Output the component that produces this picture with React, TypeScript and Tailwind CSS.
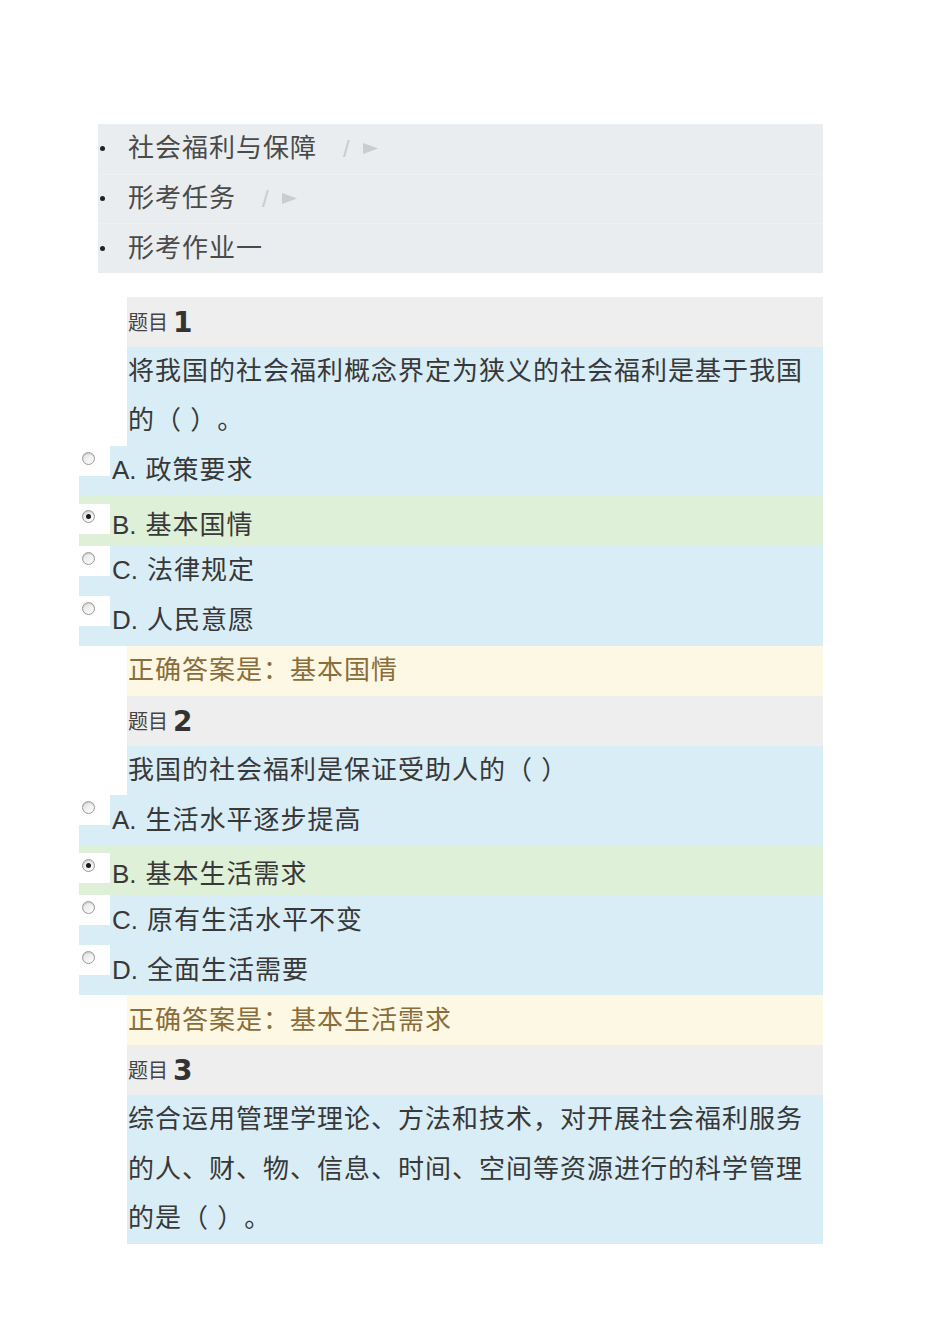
import React from 'react'

type Option = { key: string; text: string; checked?: boolean }
type Question = { no: number; text: string; options?: Option[]; answer?: string }

const crumbs = [
  { label: '社会福利与保障', link: true },
  { label: '形考任务', link: true },
  { label: '形考作业一', link: false },
]

const questions: Question[] = [
  {
    no: 1,
    text: '将我国的社会福利概念界定为狭义的社会福利是基于我国的（ ）。',
    options: [
      { key: 'A', text: '政策要求' },
      { key: 'B', text: '基本国情', checked: true },
      { key: 'C', text: '法律规定' },
      { key: 'D', text: '人民意愿' },
    ],
    answer: '基本国情',
  },
  {
    no: 2,
    text: '我国的社会福利是保证受助人的（ ）',
    options: [
      { key: 'A', text: '生活水平逐步提高' },
      { key: 'B', text: '基本生活需求', checked: true },
      { key: 'C', text: '原有生活水平不变' },
      { key: 'D', text: '全面生活需要' },
    ],
    answer: '基本生活需求',
  },
  {
    no: 3,
    text: '综合运用管理学理论、方法和技术，对开展社会福利服务的人、财、物、信息、时间、空间等资源进行的科学管理的是（ ）。',
  },
]

function Radio({ checked }: { checked?: boolean }) {
  return (
    <span className="flex h-[13px] w-[13px] items-center justify-center rounded-full border border-[#9a9a9a] bg-gradient-to-br from-[#e2e2e2] to-white shadow-[inset_0_1px_1px_rgba(0,0,0,0.15)]">
      {checked && <span className="h-[5px] w-[5px] rounded-full bg-[#1a1a1a]" />}
    </span>
  )
}

function OptionRow({ opt }: { opt: Option }) {
  return (
    <div className={`flex h-[50px] ${opt.checked ? 'bg-[#dff0d8]' : 'bg-[#d9edf7]'}`}>
      <div className={`h-[30px] w-[31px] shrink-0 bg-white pl-[3px] pt-[6px] ${opt.checked ? 'mt-[8px]' : ''}`}>
        <Radio checked={opt.checked} />
      </div>
      <div className={`ml-[2px] flex items-center text-[26px] tracking-[1px] text-[#383838] ${opt.checked ? 'pt-[9px]' : ''}`}>
        <span className="tracking-normal">{opt.key}.</span>
        <span className="ml-[9px]">{opt.text}</span>
      </div>
    </div>
  )
}

export default function App() {
  return (
    <div className="min-h-[1344px] w-[950px] bg-white pt-[124px] font-['Liberation_Sans','Noto_Sans_CJK_SC',sans-serif] [text-spacing-trim:space-all]">
      <ul className="ml-[98px] w-[725px] bg-[#e9edf0]">
        {crumbs.map((c, i) => (
          <li key={c.label} className={`flex h-[49.5px] items-center text-[26px] tracking-[1px] text-[#4a4a4a] ${i > 0 ? 'border-t border-[#eef1f3]' : ''}`}>
            <span className="ml-[2px] h-[5px] w-[5px] rounded-full bg-[#222]" />
            <span className="ml-[23px]">{c.label}</span>
            {c.link && (
              <>
                <span className="ml-[26px] text-[24px] font-light text-[#cccccc]">/</span>
                <svg className="ml-[12px]" width="15" height="11" viewBox="0 0 15 11">
                  <path d="M0 0 L15 5.5 L0 11 Z" fill="#cccccc" />
                </svg>
              </>
            )}
          </li>
        ))}
      </ul>

      <div className="ml-[79px] mt-[24px] w-[744px]">
        {questions.map((q) => (
          <div key={q.no}>
            <div className="ml-[48px] flex h-[50px] items-center bg-[#eeeeee] pl-[1px] pt-[2px]">
              <span className="text-[20px] text-[#444]">题目</span>
              <span className="ml-[5px] font-['DejaVu_Sans',sans-serif] text-[28px] font-bold leading-none text-[#333]">{q.no}</span>
            </div>
            <div className="ml-[48px] bg-[#d9edf7] pl-[1px] text-[26px] leading-[49.5px] tracking-[1px] text-[#383838]">
              {q.text}
            </div>
            {q.options?.map((o) => <OptionRow key={o.key} opt={o} />)}
            {q.answer && (
              <div className="ml-[48px] flex h-[50px] items-center bg-[#fcf8e3] pl-[1px] text-[26px] tracking-[1px] text-[#8a6d3b]">
                正确答案是：{q.answer}
              </div>
            )}
          </div>
        ))}
      </div>
    </div>
  )
}
